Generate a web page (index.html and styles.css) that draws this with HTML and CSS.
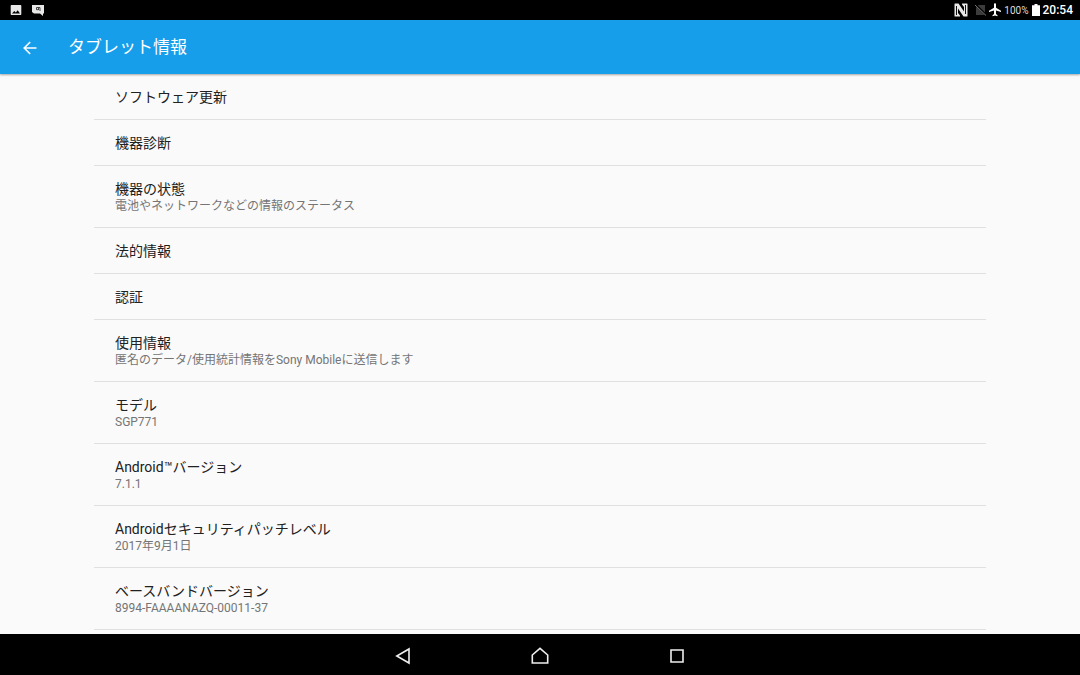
FILE: index.html
```html
<!DOCTYPE html>
<html lang="ja">
<head>
  <meta charset="UTF-8" />
  <meta name="viewport" content="width=device-width, initial-scale=1.0"/>
  <title>タブレット情報</title>
  <link rel="stylesheet" href="styles.css">
</head>
<body>
  <!-- STATUS BAR -->
  <div class="status-bar">
    <div class="status-left">
      <svg width="12" height="12" viewBox="0 0 12 12" aria-hidden="true">
        <path fill="#e8e8e8" fill-rule="evenodd" d="M1.500 1h9q.8 0 .8.8v8.400q0 .8-.8.8h-9q-.8 0-.8-.8V1.800q0-.8.800-.8zM2 9.500h8L7.700 6.300 5.800 8.600 4.300 7z"/>
      </svg>
      <svg width="12" height="12" viewBox="0 0 12 12" aria-hidden="true">
        <path fill="#e8e8e8" d="M0 1h12v8.500h-1V12L8 9.500H2L0 8z"/>
        <path fill="none" stroke="#444" d="M4.500 3.500h3.500V7M4.500 3.500v2.200h2M6.500 3.500V6"/>
      </svg>
    </div>
    <div class="status-right">
      <svg class="nfc" width="14" height="14" viewBox="0 0 14 14" aria-hidden="true">
        <path fill="#e8e8e8" d="M.5 1Q.5.500 1 .5H4.500L10 8.500V4L8 1.500V.5h5q.5 0 .5.5v12q0 .5-.5.5H9.500L4 5.500V10l2 2.500v1H1q-.5 0-.5-.5z"/>
        <path fill="none" stroke="#111" d="M2.500 12V3M11.500 2v9"/>
      </svg>
      <svg class="sim" width="11" height="12" viewBox="0 0 11 12" aria-hidden="true">
        <path fill="#3c3c3c" d="M3.500 1H10v10H1V3.500z"/>
        <path stroke="#000" stroke-width="2" d="M1 1l10 10"/>
        <path stroke="#777" d="M0 1l11 10.500"/>
      </svg>
      <svg class="plane" width="12" height="14" viewBox="0 0 12 14" aria-hidden="true">
        <path fill="#fff" d="M12 9V7.700L7 4.700V1.500C7 .8 6.600.3 6 .3s-1 .5-1 1.200v3.200L0 7.700V9l5-1.500V11l-1.500 1.200v1L6 12.500l2.500.7v-1L7 11V7.500z"/>
      </svg>
      <span class="percent">100%</span>
      <svg class="battery" width="8" height="12" viewBox="0 0 8 12" aria-hidden="true">
        <path fill="#fff" d="M2.500 0h3v1.200H8V12H0V1.200h2.500z"/>
      </svg>
      <span class="clock">20:54</span>
    </div>
  </div>

  <!-- APP BAR -->
  <header class="app-bar">
    <button class="back-btn" type="button" aria-label="戻る">
      <svg width="14" height="14" viewBox="0 0 14 14" aria-hidden="true">
        <path fill="none" stroke="#fff" stroke-width="1.600" d="M13.500 7H1.500M7.200 1 1.200 7l6 6"/>
      </svg>
    </button>
    <h1>タブレット情報</h1>
  </header>

  <!-- SETTINGS LIST -->
  <main class="content">
    <ul class="settings">
      <li><a href="#update"><span class="title">ソフトウェア更新</span></a></li>
      <li><a href="#diagnostics"><span class="title">機器診断</span></a></li>
      <li><a href="#status"><span class="title">機器の状態</span><span class="summary">電池やネットワークなどの情報のステータス</span></a></li>
      <li><a href="#legal"><span class="title">法的情報</span></a></li>
      <li><a href="#certificates"><span class="title">認証</span></a></li>
      <li><a href="#usage"><span class="title">使用情報</span><span class="summary">匿名のデータ/使用統計情報をSony Mobileに送信します</span></a></li>
      <li><a href="#model"><span class="title">モデル</span><span class="summary">SGP771</span></a></li>
      <li><a href="#version"><span class="title">Android™バージョン</span><span class="summary">7.1.1</span></a></li>
      <li><a href="#patch"><span class="title">Androidセキュリティパッチレベル</span><span class="summary">2017年9月1日</span></a></li>
      <li><a href="#baseband"><span class="title">ベースバンドバージョン</span><span class="summary">8994-FAAAANAZQ-00011-37</span></a></li>
    </ul>
  </main>

  <!-- NAVIGATION BAR -->
  <nav class="nav-bar">
    <button type="button" aria-label="戻る">
      <svg width="18" height="18" viewBox="0 0 18 18" aria-hidden="true">
        <path d="M15 2v14L2.800 9z"/>
      </svg>
    </button>
    <button type="button" aria-label="ホーム">
      <svg width="18" height="18" viewBox="0 0 18 18" aria-hidden="true">
        <path d="M1.300 16V8L9 1.300 16.700 8v8z"/>
      </svg>
    </button>
    <button type="button" aria-label="履歴">
      <svg width="18" height="18" viewBox="0 0 18 18" aria-hidden="true">
        <path d="M3 3h12v12H3z"/>
      </svg>
    </button>
  </nav>
</body>
</html>
```
FILE: styles.css
```css
* {
  box-sizing: border-box;
}

body {
  margin: 0;
  height: 100vh;
  display: flex;
  flex-direction: column;
  background: #fafafa;
  font-family: Roboto, "Noto Sans CJK JP", sans-serif;
}

button {
  display: flex;
  align-items: center;
  justify-content: center;
  padding: 0;
  border: none;
  background: none;
  cursor: pointer;
}

.status-bar {
  flex: none;
  display: flex;
  justify-content: space-between;
  height: 20px;
  padding: 0 7px 0 10px;
  background: #000;
  color: #fff;
}

.status-left,
.status-right {
  display: flex;
  align-items: center;
}

.status-left {
  gap: 10px;
}

.status-right {
  gap: 3px;
}

.nfc {
  margin-right: 4px;
}

.percent {
  font-size: 10px;
  color: #ddd;
}

.clock {
  font-size: 12px;
  font-weight: 500;
}

.app-bar {
  flex: none;
  display: flex;
  align-items: center;
  height: 54px;
  padding-top: 1px;
  background: #169eeb;
  box-shadow: 0 1px 2px rgba(0, 0, 0, 0.35);
  z-index: 1;
}

.back-btn {
  width: 60px;
  height: 53px;
}

h1 {
  margin: 0 0 0 8px;
  color: #fff;
  font-size: 17px;
  font-weight: 400;
  line-height: 25px;
}

.content {
  flex: 1;
  min-height: 0;
  overflow: hidden;
}

.settings {
  list-style: none;
  margin: 0 94px;
  padding: 0;
}

.settings a {
  display: block;
  padding: 14px 21px 13px;
  border-bottom: 1px solid #e0e0e0;
  text-decoration: none;
}

.title,
.summary {
  display: block;
  white-space: nowrap;
}

.title {
  color: #212121;
  font-size: 14px;
  line-height: 18px;
}

.summary {
  color: #757575;
  font-size: 12px;
  line-height: 16px;
}

.nav-bar {
  flex: none;
  display: flex;
  justify-content: center;
  height: 41px;
  background: #000;
}

.nav-bar button {
  width: 137px;
  padding-top: 2px;
}

.nav-bar path {
  fill: none;
  stroke: #eee;
  stroke-width: 1.6;
}
```
